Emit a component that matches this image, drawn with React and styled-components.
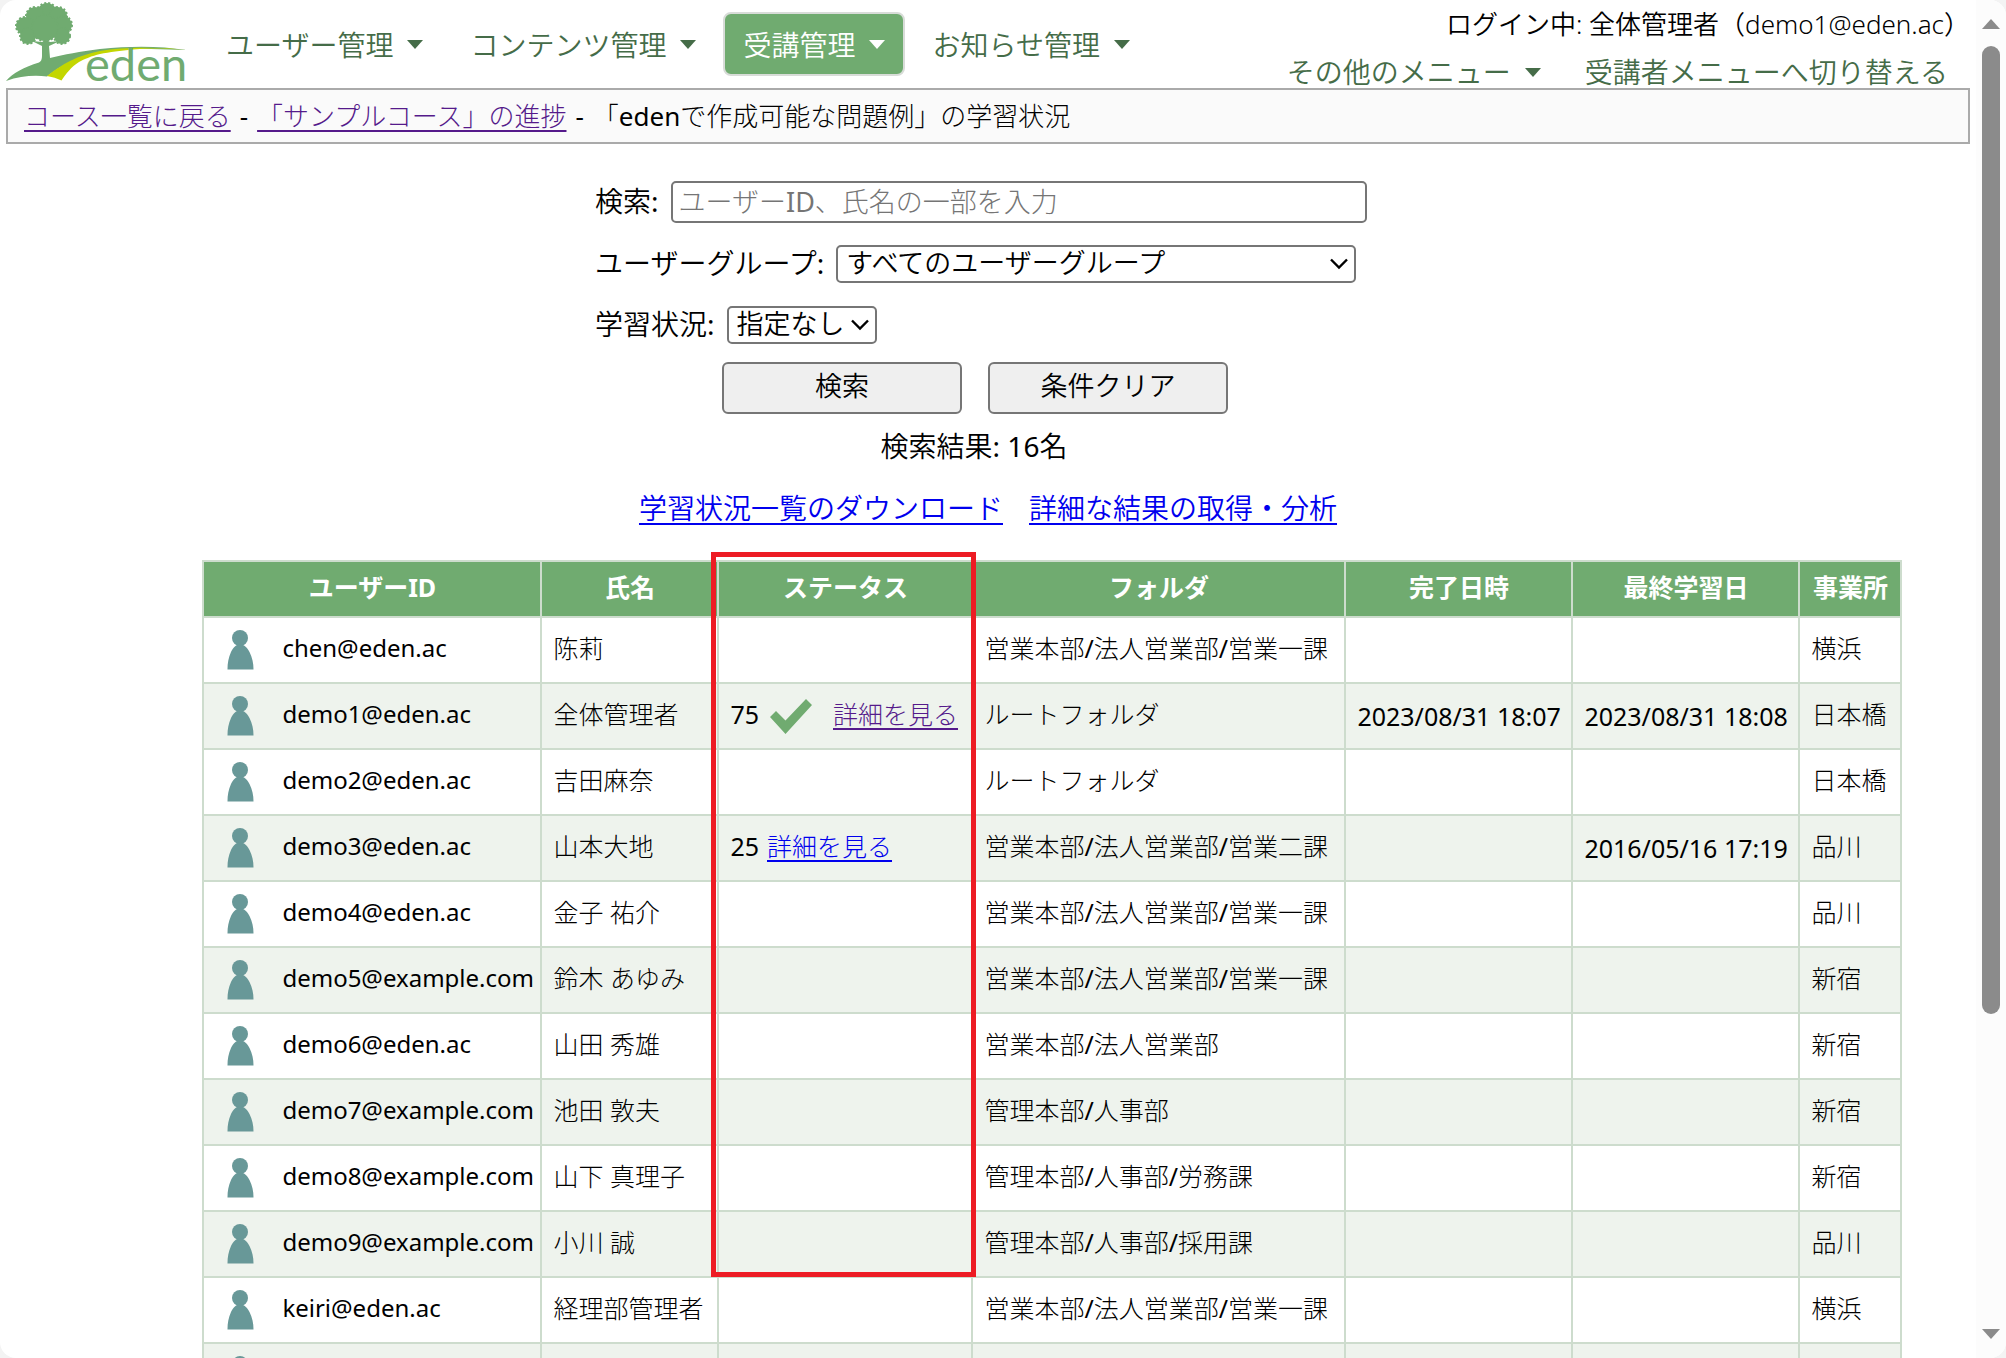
import React from "react";
import styled, { createGlobalStyle } from "styled-components";

const green = "#70ab70";
const darkGreen = "#456c48";
const line = "#cddccd";
const thinFont = `"Noto Sans", "Noto Sans CJK JP Light", "Noto Sans CJK JP", sans-serif`;

const Global = createGlobalStyle`
  *, *::before, *::after { box-sizing: border-box; }
  body {
    margin: 0;
    background: #f3f3f3;
    color: #000;
    font-family: "Noto Sans", "Noto Sans CJK JP DemiLight", "Noto Sans CJK JP", sans-serif;
    font-weight: 400;
    font-size: 28px;
    line-height: 40px;
  }
  input, select, button { font-family: inherit; font-weight: inherit; color: inherit; }
`;

const Window = styled.div`
  display: flex;
  height: 100vh;
  overflow: hidden;
  background: #fff;
  border-radius: 16px;
`;

const Page = styled.div`
  flex: 1;
  min-width: 0;
  padding: 0 6px;
  overflow: hidden;
`;

const Header = styled.header`
  display: flex;
  align-items: flex-start;
  height: 88px;
  white-space: nowrap;
`;

const LogoLink = styled.a`
  display: block;
  width: 184px;
  height: 84px;
  & > svg { overflow: visible; }
`;

const Nav = styled.nav`
  display: flex;
  gap: 7px;
  margin: 12px 0 0 16px;
`;

const NavButton = styled.button`
  display: flex;
  align-items: center;
  gap: 14px;
  height: 64px;
  padding: 0 18px;
  border: 2px solid ${(p) => (p.$active ? "#d8dcd8" : "transparent")};
  border-radius: 8px;
  background: ${(p) => (p.$active ? green : "transparent")};
  color: ${(p) => (p.$active ? "#fff" : darkGreen)};
  font-size: 28px;
`;

const Account = styled.div`
  display: flex;
  flex-direction: column;
  align-items: flex-end;
  gap: 8px;
  margin-left: auto;
  padding: 4px 0 0;
  line-height: 40px;
`;

const LoginName = styled.span`
  font-family: "Noto Sans", "Noto Sans CJK JP", sans-serif;
  font-weight: 350;
  font-size: 26px;
`;

const SubMenu = styled.div`
  display: flex;
  gap: 44px;
  padding-right: 22px;
`;

const SubButton = styled.button`
  display: flex;
  align-items: center;
  gap: 14px;
  padding: 0;
  border: 0;
  background: none;
  color: ${darkGreen};
  font-size: 28px;
  line-height: 40px;
`;

const SubLink = styled.a`
  color: ${darkGreen};
  text-decoration: none;
`;

const Breadcrumb = styled.nav`
  height: 56px;
  padding: 6px 16px;
  border: 2px solid #aaa;
  background: #fafafa;
  font-family: ${thinFont};
  font-size: 26px;
  line-height: 40px;
`;

const Separator = styled.span`
  margin: 0 9px;
`;

const Anchor = styled.a`
  color: ${(p) => (p.$visited ? "#551a8b" : "#0000ee")};
  text-decoration: underline;
  text-decoration-thickness: 2px;
  text-underline-offset: 4px;
`;

const SearchForm = styled.form`
  width: 786px;
  margin: 36px auto 0;
`;

const Field = styled.div`
  display: flex;
  align-items: center;
  gap: 12px;
  height: ${(p) => (p.$tall ? 44 : 38)}px;
  margin-bottom: ${(p) => (p.$tall ? 21 : 23)}px;
`;

const Label = styled.label`
  padding-bottom: 2px;
`;

const TextInput = styled.input`
  width: 696px;
  height: 42px;
  padding: 0 6px 2px;
  border: 2px solid #767676;
  border-radius: 5px;
  font-family: ${thinFont};
  font-size: 27px;
  &::placeholder { color: #757575; opacity: 1; }
`;

const SelectWrap = styled.div`
  display: grid;
  align-items: center;
  width: ${(p) => p.$width}px;
  & > * { grid-area: 1 / 1; }
  & > svg { justify-self: end; margin-right: 8px; pointer-events: none; }
`;

const Select = styled.select`
  appearance: none;
  width: 100%;
  height: 38px;
  padding: 0 8px 2px;
  border: 2px solid #767676;
  border-radius: 5px;
  background: #fff;
  font-size: 27px;
  line-height: 32px;
`;

const Buttons = styled.div`
  display: flex;
  justify-content: center;
  gap: 26px;
  margin-top: -5px;
  padding-right: 26px;
`;

const PushButton = styled.button`
  width: 240px;
  height: 52px;
  padding: 0 0 8px;
  border: 2px solid #767676;
  border-radius: 6px;
  background: #efefef;
  font-size: 27px;
`;

const Result = styled.p`
  margin: 12px 0 0;
  padding-right: 28px;
  text-align: center;
`;

const Links = styled.div`
  display: flex;
  justify-content: center;
  gap: 26px;
  margin: 22px 0 0;
`;

const Table = styled.table`
  width: 1698px;
  margin: 32px 0 0 10%;
  border-collapse: collapse;
  table-layout: fixed;
  font-family: ${thinFont};
  font-size: 25px;
  line-height: 36px;
  white-space: nowrap;
`;

const Col = styled.col`
  width: ${(p) => p.$width}px;
`;

const Th = styled.th`
  position: relative;
  height: 56px;
  padding: 0 0 4px;
  border: 2px solid ${line};
  background: ${green};
  color: #fff;
  font-family: "Noto Sans", "Noto Sans CJK JP", sans-serif;
  font-weight: 700;
`;

const Highlight = styled.div`
  position: absolute;
  z-index: 1;
  top: -10px;
  left: -8px;
  right: -5px;
  height: 725px;
  border: 5px solid #ed1c24;
  pointer-events: none;
`;

const Tr = styled.tr`
  background: #fff;
  &:nth-child(even) { background: #eef3ed; }
`;

const Td = styled.td`
  height: 66px;
  padding: 0 11px ${(p) => (p.$date ? 0 : 4)}px;
  border: 2px solid ${line};
`;

const User = styled.div`
  display: flex;
  align-items: center;
  gap: 28px;
  height: 44px;
  padding-left: 12px;
  font-size: 24px;
  & > svg { flex-shrink: 0; margin-top: 4px; }
`;

const Status = styled.div`
  display: flex;
  align-items: center;
  gap: 8px;
`;

const CheckIcon = styled.svg`
  width: 42px;
  height: 35px;
  margin: 4px 13px 0 3px;
`;

const Scrollbar = styled.div`
  display: flex;
  flex-direction: column;
  align-items: center;
  width: 30px;
  padding: 19px 0;
  background: #fcfcfc;
`;

const Thumb = styled.div`
  width: 18px;
  height: 968px;
  margin: 17px 0 auto;
  border-radius: 9px;
  background: #8b8b8b;
`;

const Caret = () => (
  <svg width="16" height="9" viewBox="0 0 16 9" fill="currentColor" aria-hidden="true">
    <path d="M0 0H16L8 9Z" />
  </svg>
);

const Chevron = () => (
  <svg width="18" height="12" viewBox="0 0 18 12" fill="none" stroke="#000" strokeWidth="2.4" aria-hidden="true">
    <path d="M1 1.5L9 9.5L17 1.5" />
  </svg>
);

const Person = () => (
  <svg width="27" height="40" viewBox="0 0 27 40" fill="#689898" aria-hidden="true">
    <circle cx="13" cy="8" r="8" />
    <path d="M13 14.5C17 14.5 20 17 22.5 22C25.3 27.500 26.500 33 26.500 39.500H0.500C0.500 33 1.500 27.500 4 22C6.500 17 9 14.500 13 14.500Z" />
  </svg>
);

const Logo = () => (
  <svg width="184" height="84" viewBox="6 0 184 84" role="img" aria-label="eden">
    <g fill={green}>
      <g stroke={green} strokeWidth="2" strokeDasharray="2 2">
        <circle cx="47" cy="13" r="10" />
        <circle cx="35" cy="16" r="9" />
        <circle cx="58" cy="16" r="9" />
        <circle cx="25" cy="26" r="9" />
        <circle cx="63" cy="25" r="9" />
        <circle cx="28" cy="36" r="8" />
        <circle cx="62" cy="36" r="8" />
        <circle cx="45" cy="28" r="13" />
      </g>
      <path d="M32 41L42 46V56Q42 61 39 62.500C24 67 13 73 6 81C20 76 34 75 47 76.500C60 66 80 53 133 48.500L187 50C160 46 133 45.500 100 49C80 51.500 64 54.500 50 58L49 46L60 41L50 42L46 40L42 42Z" />
    </g>
    <path d="M47 76C56 69 62 65 70 61C80 56 90 53 100 51C125 46.500 160 47 187 50C165 48.500 150 48 133 49.500C120 51 110 52 100 54C92 56 84 59 79 62C71 67 66 74 61.500 80.500Q55 77 47 76Z" fill="#c3d600" />
    <text x="85" y="81" fill={green} fontFamily="Lato, sans-serif" fontWeight="400" fontSize="47">eden</text>
  </svg>
);

const menus = [
  { label: "ユーザー管理" },
  { label: "コンテンツ管理" },
  { label: "受講管理", active: true },
  { label: "お知らせ管理" },
];

const columns = [
  ["ユーザーID", 338],
  ["氏名", 177],
  ["ステータス", 254],
  ["フォルダ", 373],
  ["完了日時", 227],
  ["最終学習日", 227],
  ["事業所", 102],
];

const rows = [
  { id: "chen@eden.ac", name: "陈莉", folder: "営業本部/法人営業部/営業一課", office: "横浜" },
  { id: "demo1@eden.ac", name: "全体管理者", score: 75, passed: true, folder: "ルートフォルダ", done: "2023/08/31 18:07", last: "2023/08/31 18:08", office: "日本橋" },
  { id: "demo2@eden.ac", name: "吉田麻奈", folder: "ルートフォルダ", office: "日本橋" },
  { id: "demo3@eden.ac", name: "山本大地", score: 25, folder: "営業本部/法人営業部/営業二課", last: "2016/05/16 17:19", office: "品川" },
  { id: "demo4@eden.ac", name: "金子 祐介", folder: "営業本部/法人営業部/営業一課", office: "品川" },
  { id: "demo5@example.com", name: "鈴木 あゆみ", folder: "営業本部/法人営業部/営業一課", office: "新宿" },
  { id: "demo6@eden.ac", name: "山田 秀雄", folder: "営業本部/法人営業部", office: "新宿" },
  { id: "demo7@example.com", name: "池田 敦夫", folder: "管理本部/人事部", office: "新宿" },
  { id: "demo8@example.com", name: "山下 真理子", folder: "管理本部/人事部/労務課", office: "新宿" },
  { id: "demo9@example.com", name: "小川 誠", folder: "管理本部/人事部/採用課", office: "品川" },
  { id: "keiri@eden.ac", name: "経理部管理者", folder: "営業本部/法人営業部/営業一課", office: "横浜" },
  { id: "" },
];

export default function App() {
  return (
    <>
      <Global />
      <Window>
        <Page>
          <Header>
            <LogoLink href="#"><Logo /></LogoLink>
            <Nav>
              {menus.map((m) => (
                <NavButton key={m.label} type="button" $active={m.active}>
                  {m.label}
                  <Caret />
                </NavButton>
              ))}
            </Nav>
            <Account>
              <LoginName>ログイン中: 全体管理者（demo1@eden.ac）</LoginName>
              <SubMenu>
                <SubButton type="button">その他のメニュー<Caret /></SubButton>
                <SubLink href="#">受講者メニューへ切り替える</SubLink>
              </SubMenu>
            </Account>
          </Header>
          <Breadcrumb>
            <Anchor href="#" $visited>コース一覧に戻る</Anchor>
            <Separator>-</Separator>
            <Anchor href="#" $visited>「サンプルコース」の進捗</Anchor>
            <Separator>-</Separator>
            「edenで作成可能な問題例」の学習状況
          </Breadcrumb>
          <main>
            <SearchForm onSubmit={(e) => e.preventDefault()}>
              <Field $tall>
                <Label htmlFor="keyword">検索:</Label>
                <TextInput id="keyword" type="text" placeholder="ユーザーID、氏名の一部を入力" />
              </Field>
              <Field>
                <Label htmlFor="group">ユーザーグループ:</Label>
                <SelectWrap $width={520}>
                  <Select id="group"><option>すべてのユーザーグループ</option></Select>
                  <Chevron />
                </SelectWrap>
              </Field>
              <Field>
                <Label htmlFor="progress">学習状況:</Label>
                <SelectWrap $width={150}>
                  <Select id="progress"><option>指定なし</option></Select>
                  <Chevron />
                </SelectWrap>
              </Field>
              <Buttons>
                <PushButton type="submit">検索</PushButton>
                <PushButton type="reset">条件クリア</PushButton>
              </Buttons>
            </SearchForm>
            <Result>検索結果: 16名</Result>
            <Links>
              <Anchor href="#">学習状況一覧のダウンロード</Anchor>
              <Anchor href="#">詳細な結果の取得・分析</Anchor>
            </Links>
            <Table>
              <colgroup>
                {columns.map(([label, width]) => <Col key={label} $width={width} />)}
              </colgroup>
              <thead>
                <tr>
                  {columns.map(([label]) => (
                    <Th key={label} scope="col">
                      {label}
                      {label === "ステータス" && <Highlight />}
                    </Th>
                  ))}
                </tr>
              </thead>
              <tbody>
                {rows.map((r) => (
                  <Tr key={r.id}>
                    <Td><User><Person />{r.id}</User></Td>
                    <Td>{r.name}</Td>
                    <Td>
                      {r.score && (
                        <Status>
                          {r.score}
                          {r.passed && (
                            <CheckIcon viewBox="0 0 42 35" fill={green} role="img" aria-label="合格">
                              <path d="M0 18L6 12L15.500 21.500L36 0L42 6L15.500 35Z" />
                            </CheckIcon>
                          )}
                          <Anchor href="#" $visited={r.passed}>詳細を見る</Anchor>
                        </Status>
                      )}
                    </Td>
                    <Td>{r.folder}</Td>
                    <Td $date>{r.done}</Td>
                    <Td $date>{r.last}</Td>
                    <Td>{r.office}</Td>
                  </Tr>
                ))}
              </tbody>
            </Table>
          </main>
        </Page>
        <Scrollbar aria-hidden="true">
          <svg width="18" height="10" viewBox="0 0 18 10" fill="#8b8b8b"><path d="M9 0L18 10H0Z" /></svg>
          <Thumb />
          <svg width="18" height="10" viewBox="0 0 18 10" fill="#8b8b8b"><path d="M0 0H18L9 10Z" /></svg>
        </Scrollbar>
      </Window>
    </>
  );
}
